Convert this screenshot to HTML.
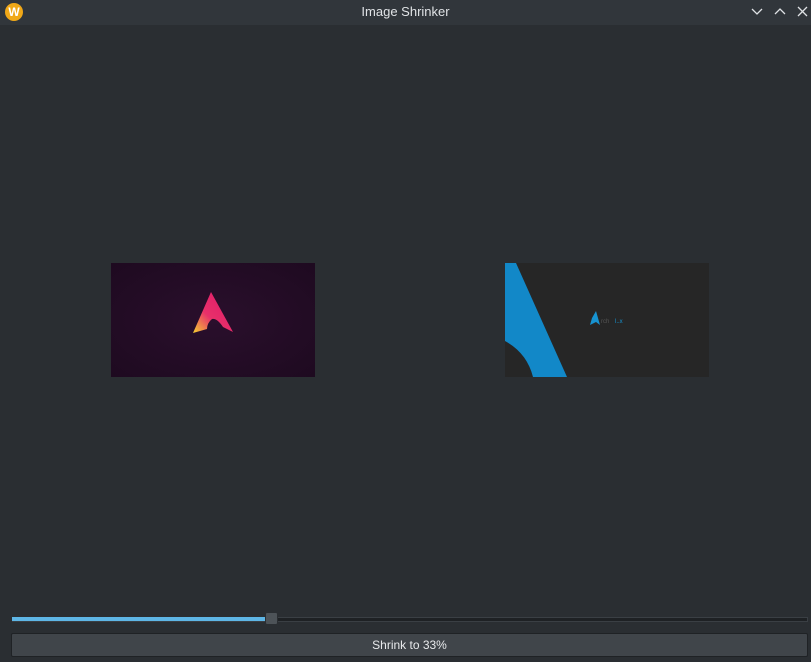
<!DOCTYPE html>
<html><head><style>
body{margin:0;width:811px;height:662px;background:#2a2e32;position:relative;overflow:hidden;font-family:"Liberation Sans",sans-serif}
.tb{position:absolute;left:0;top:0;width:811px;height:25px;background:#31363b;color:#e0e3e6;font-size:13px;text-align:center;line-height:23px}
.ic{position:absolute;left:5px;top:3px;width:18px;height:18px;border-radius:50%;background:#f0a818;color:#fff;font-size:12px;font-weight:bold;line-height:18px;text-align:center}
.btns{position:absolute;right:2px;top:0;color:#dfe2e5;font-size:13px;letter-spacing:9px}
</style></head><body>
<div class="tb"><div class="ic">W</div>Image Shrinker
<svg style="position:absolute;left:750px;top:5px" width="60" height="14" stroke="#dfe2e5" fill="none" stroke-width="1.3">
<path d="M2 4 L7 9 L12 4"/><path d="M25 9 L30 4 L35 9"/><path d="M48 2 L57 11 M57 2 L48 11"/></svg></div>
<div style="position:absolute;left:111px;top:263px;width:204px;height:114px;background:radial-gradient(ellipse at 50% 50%,#2a0f2c,#1e0a20)">
<svg width="204" height="114" style="position:absolute;left:0;top:0"><defs><linearGradient id="g" x1="0" y1="1" x2="1" y2="0"><stop offset="0" stop-color="#f5d030"/><stop offset="0.4" stop-color="#e8306a"/><stop offset="1" stop-color="#e0186a"/></linearGradient></defs>
<path d="M100 29 L122 69 L112 64 Q106 55 101 56 Q96 60 96 66 L82 70 Z" fill="url(#g)"/></svg></div>
<div style="position:absolute;left:505px;top:263px;width:204px;height:114px;background:#262626;overflow:hidden">
<svg width="204" height="114"><path d="M0 0 L11 0 L62 114 L28 114 Q22 90 0 78 Z" fill="#1288c8"/>
<path d="M87 55 L91 48 L95 62 L91 59 L85 62 Z" fill="#1793d1"/><text x="96" y="60" font-size="6" fill="#555">rch</text><text x="110" y="60" font-size="6" fill="#1793d1">l..x</text></svg></div>
<div style="position:absolute;left:12px;top:617px;width:794px;height:3px;background:#1e2124;border:1px solid #3a3f44;box-sizing:content-box"></div>
<div style="position:absolute;left:12px;top:617px;width:256px;height:4px;background:#5eb6e6"></div>
<div style="position:absolute;left:265px;top:612px;width:11px;height:11px;background:#4d5358;border:1px solid #2a2e32;border-radius:2px"></div>
<div style="position:absolute;left:11px;top:633px;width:795px;height:22px;background:#40454a;border:1px solid #1f2225;border-radius:2px;color:#e8eaec;font-size:12px;text-align:center;line-height:22px">Shrink to 33%</div>
</body></html>
